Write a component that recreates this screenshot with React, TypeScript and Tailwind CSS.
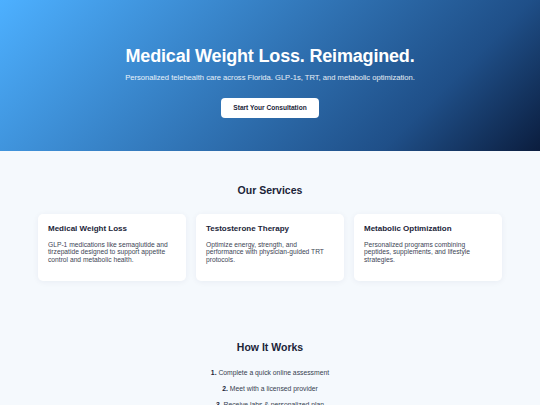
import React from "react";

const services = [
  {
    title: "Medical Weight Loss",
    text: "GLP-1 medications like semaglutide and tirzepatide designed to support appetite control and metabolic health.",
  },
  {
    title: "Testosterone Therapy",
    text: "Optimize energy, strength, and performance with physician-guided TRT protocols.",
  },
  {
    title: "Metabolic Optimization",
    text: "Personalized programs combining peptides, supplements, and lifestyle strategies.",
  },
];

const steps = [
  "Complete a quick online assessment",
  "Meet with a licensed provider",
  "Receive labs & personalized plan",
];

const App: React.FC = () => {
  return (
    <div className="min-h-screen bg-[#f5f9fd] font-['Liberation_Sans',Arial,sans-serif] text-[#1b2438]">
      <section className="h-[151px] bg-[linear-gradient(135deg,#4db0ff_0%,#1f4f88_77%,#0b1d3e_100%)] flex flex-col items-center pt-[47px] text-center text-white">
        <h1 className="text-[18px] font-bold leading-none tracking-[-0.01em]">
          Medical Weight Loss. Reimagined.
        </h1>
        <p className="text-[7.6px] leading-[8px] mt-[9px] text-white/90">
          Personalized telehealth care across Florida. GLP-1s, TRT, and metabolic optimization.
        </p>
        <button className="mt-[16px] bg-white text-[#1b2438] text-[6.6px] font-bold rounded-[4px] h-[20px] w-[98px]">
          Start Your Consultation
        </button>
      </section>

      <section className="pt-[34px]">
        <h2 className="text-center text-[10.5px] font-bold leading-none">Our Services</h2>
        <div className="mt-[18px] mx-[38px] grid grid-cols-3 gap-[10px]">
          {services.map((s) => (
            <div
              key={s.title}
              className="bg-white rounded-[5px] shadow-[0_1px_6px_rgba(15,40,80,0.06)] h-[67px] px-[10px] pt-[11px]"
            >
              <h3 className="text-[8px] font-bold leading-none">{s.title}</h3>
              <p className="mt-[8px] text-[6.7px] leading-[7.5px] text-[#3d4555]">{s.text}</p>
            </div>
          ))}
        </div>
      </section>

      <section className="pt-[61px]">
        <h2 className="text-center text-[10.5px] font-bold leading-none">How It Works</h2>
        <ol className="mt-[17px] flex flex-col items-center gap-[8px] text-[6.8px] text-[#353e4f]">
          {steps.map((s, i) => (
            <li key={s} className="leading-[8px]">
              <span className="font-bold text-[#1b2438]">{i + 1}.</span> {s}
            </li>
          ))}
        </ol>
      </section>
    </div>
  );
};

export default App;
